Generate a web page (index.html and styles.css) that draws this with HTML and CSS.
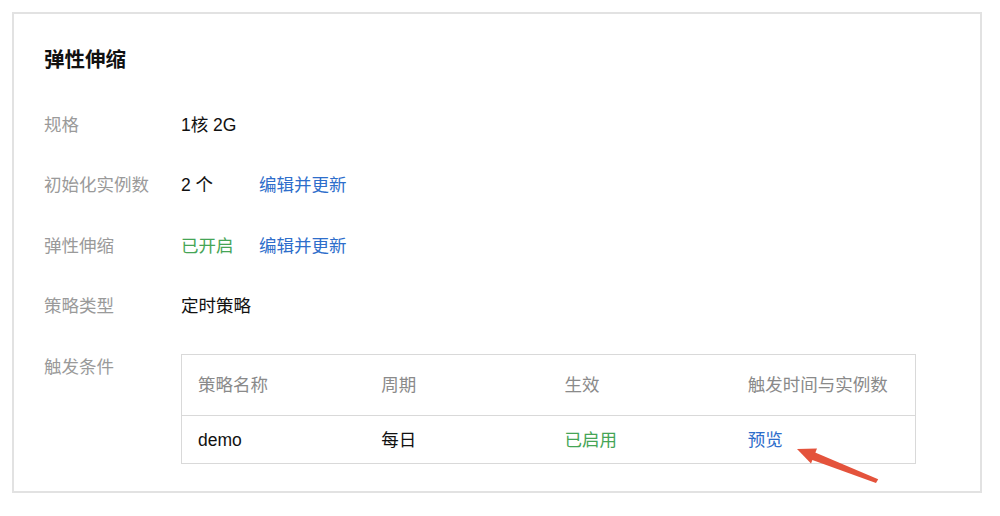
FILE: index.html
```html
<!DOCTYPE html>
<html lang="zh-CN">
<head>
<meta charset="utf-8">
<title>弹性伸缩</title>
<link rel="stylesheet" href="styles.css">
</head>
<body>
<div class="page">
  <section class="card">
    <h2 class="title">弹性伸缩</h2>
    <div class="rows">
      <div class="row">
        <div class="label">规格</div>
        <div class="value">1核 2G</div>
      </div>
      <div class="row">
        <div class="label">初始化实例数</div>
        <div class="value"><span class="count">2 个</span><a class="link">编辑并更新</a></div>
      </div>
      <div class="row">
        <div class="label">弹性伸缩</div>
        <div class="value"><span class="on">已开启</span><a class="link">编辑并更新</a></div>
      </div>
      <div class="row">
        <div class="label">策略类型</div>
        <div class="value">定时策略</div>
      </div>
      <div class="row row-top">
        <div class="label">触发条件</div>
        <div class="table">
          <div class="thead">
            <div class="cell">策略名称</div>
            <div class="cell">周期</div>
            <div class="cell">生效</div>
            <div class="cell">触发时间与实例数</div>
          </div>
          <div class="tbody">
            <div class="cell">demo</div>
            <div class="cell">每日</div>
            <div class="cell green">已启用</div>
            <div class="cell"><a class="link">预览</a></div>
          </div>
        </div>
      </div>
    </div>
  </section>
  <svg class="arrow" width="1000" height="516" viewBox="0 0 1000 516">
    <polygon points="878.2,479.2 876,483 811,459.4 813.4,451.8" fill="#e4533c"/>
    <polygon points="797,449 817,448.4 811,463.4" fill="#e4533c"/>
  </svg>
</div>
</body>
</html>
```

FILE: styles.css
```css
html, body {
  margin: 0;
  padding: 0;
  background: #ffffff;
}

.page {
  position: relative;
  width: 1000px;
  height: 516px;
  padding: 12px 0 0 12px;
  box-sizing: border-box;
  font-family: "Liberation Sans", "Noto Sans CJK SC", sans-serif;
  color: #1a1a1a;
}

.card {
  width: 970px;
  height: 481px;
  box-sizing: border-box;
  border: 2px solid #e2e2e2;
  padding: 34px 0 0 30px;
  background: #fff;
}

.title {
  margin: 0;
  font-size: 20.5px;
  line-height: 24px;
  font-weight: 700;
  color: #111;
}

.rows {
  margin-top: 22.5px;
  display: flex;
  flex-direction: column;
}

.row {
  display: flex;
  align-items: center;
  height: 60.5px;
  font-size: 17.5px;
  line-height: 20px;
}

.row-top {
  align-items: flex-start;
  height: auto;
}

.row-top .label {
  margin-top: 20.5px;
}

.row-top .table {
  margin-top: 17.5px;
}

.label {
  width: 137px;
  flex: none;
  color: #9a9a9a;
}

.value {
  display: flex;
  align-items: center;
  color: #111;
}

.count {
  width: 78px;
}

.on {
  width: 78px;
  color: #45a556;
}

.link {
  color: #2e6ecb;
  cursor: pointer;
}

.table {
  width: 735px;
  border: 1px solid #d9d9d9;
  box-sizing: border-box;
}

.thead, .tbody {
  display: grid;
  grid-template-columns: repeat(4, 1fr);
  align-items: center;
}

.thead {
  height: 60px;
  border-bottom: 1px solid #d9d9d9;
  color: #8a8a8a;
}

.tbody {
  height: 47px;
  color: #111;
}

.cell {
  padding-left: 16px;
}

.green {
  color: #45a556;
}

.arrow {
  position: absolute;
  left: 0;
  top: 0;
  pointer-events: none;
}
```
